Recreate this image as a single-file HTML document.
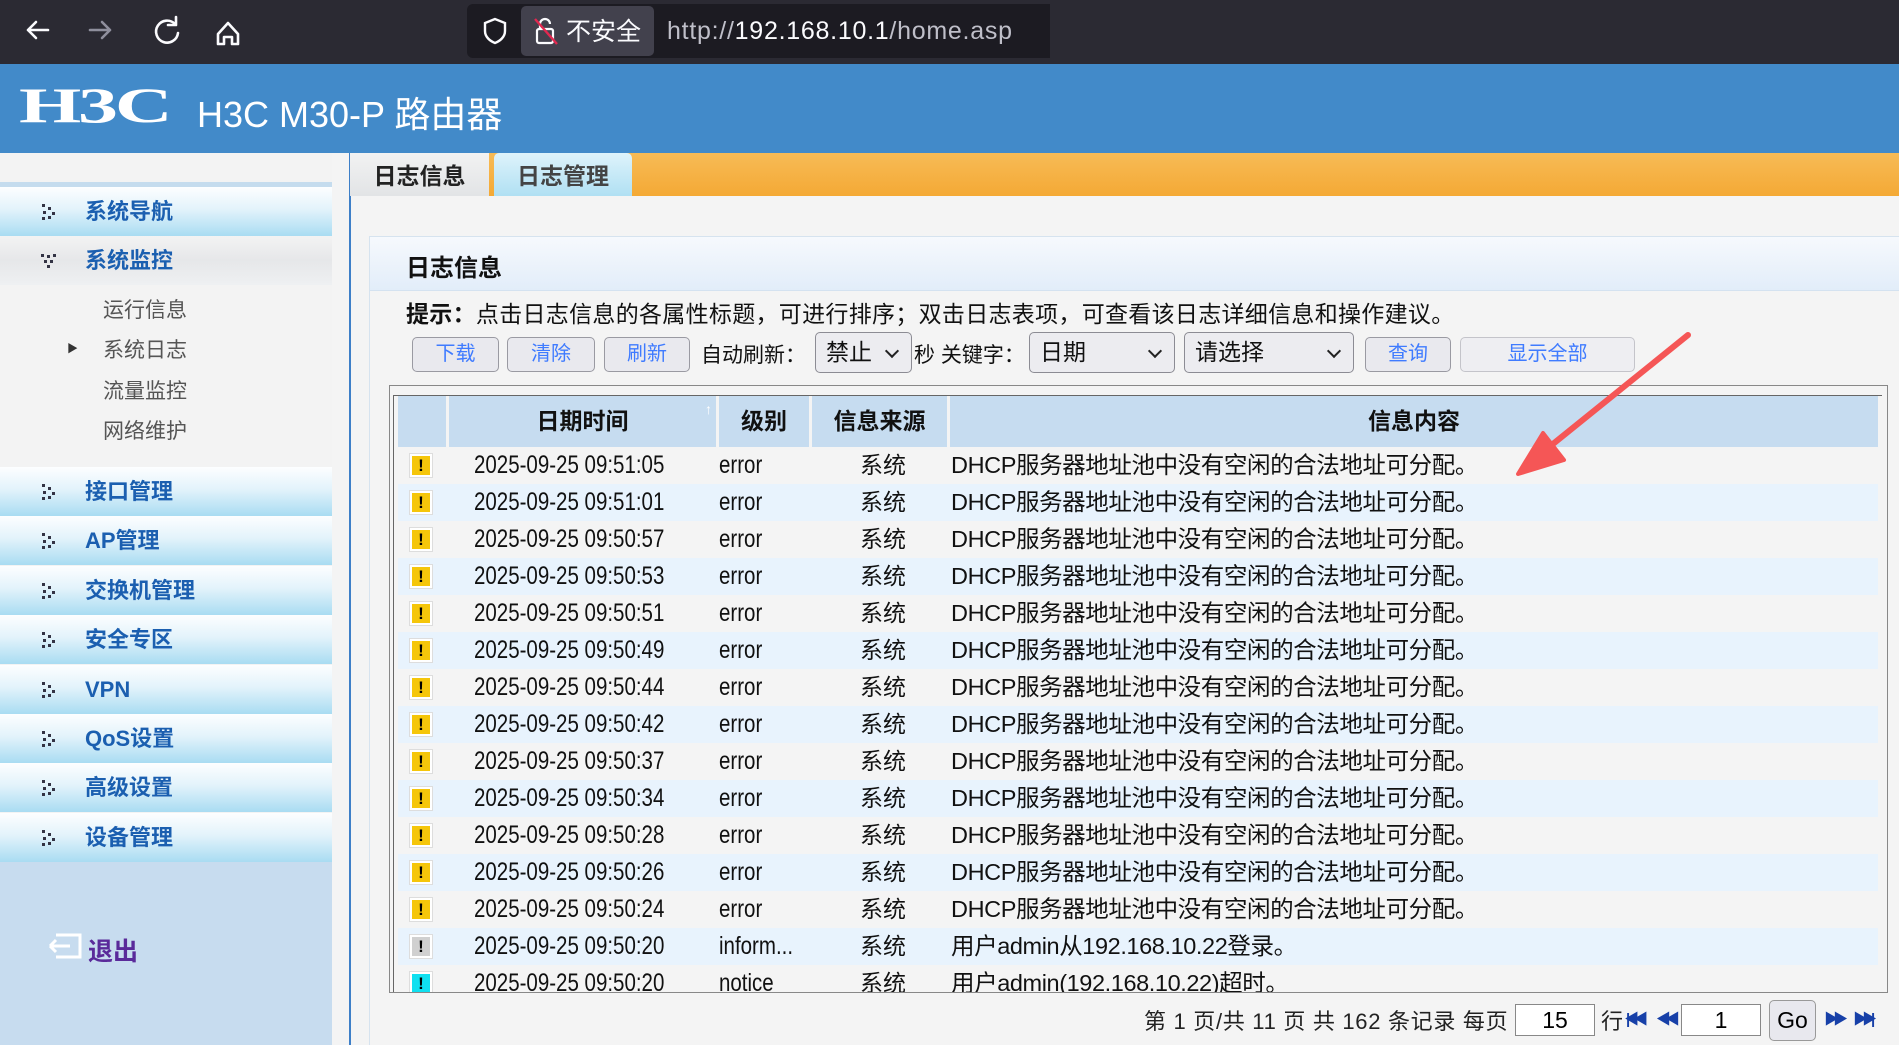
<!DOCTYPE html>
<html><head><meta charset="utf-8"><style>
*{margin:0;padding:0;box-sizing:border-box}
body{width:1899px;height:1045px;overflow:hidden;background:#f4f4f4;font-family:"Liberation Sans","Noto Sans CJK SC",sans-serif;position:relative}
.abs{position:absolute}
.bar{left:0;top:0;width:1899px;height:64px;background:#2b2a33}
.hdr{left:0;top:64px;width:1899px;height:89px;background:#428ac9}
.side{left:0;top:153px;width:332px;height:892px;background:#f3f3f3}
.sidebot{left:0;top:862px;width:332px;height:183px;background:#c7dcef}
.vline{left:349px;top:153px;width:2px;height:892px;background:#3d7fc8}
.mi{position:absolute;left:0;width:332px;height:49px;background:linear-gradient(#fdfeff,#e3f3fb 45%,#a9dcf2);color:#1b5fb0;font-weight:bold;font-size:22px;line-height:49px;padding-left:85px}
.mi svg{position:absolute;left:40px;top:15px}
.sub{position:absolute;left:103px;font-size:21px;color:#555}
.tabbar{left:350px;top:153px;width:1549px;height:43px;background:linear-gradient(#f7bb56,#f4a935)}
.tab{position:absolute;top:153px;height:43px;font-size:23px;font-weight:bold;line-height:46px;text-align:center}
.panel{left:369px;top:236px;width:1530px;height:809px;border-left:1px solid #d6e3ef;border-top:1px solid #d6e3ef}
.ph{left:370px;top:237px;width:1529px;height:54px;background:linear-gradient(#f6f9fd,#e2edf9);border-bottom:1px solid #d4e2f0}
.btn{position:absolute;top:337px;height:35px;border:1px solid #9a9aa2;border-radius:5px;background:#e9e9ee;color:#3f7bff;font-size:20px;text-align:center;line-height:33px}
.sel{position:absolute;top:332px;height:41px;border:1px solid #8c8c94;border-radius:5px;background:#ececf0;font-size:23px;line-height:39px;padding-left:10px;color:#111}
.sel:after{content:"";position:absolute;right:14px;top:13px;width:8px;height:8px;border-right:2.5px solid #222;border-bottom:2.5px solid #222;transform:rotate(45deg)}
.lbl{position:absolute;top:339px;font-size:21px;color:#111}
.tbl{left:389px;top:385px;width:1499px;height:608px;border:1px solid #888;overflow:hidden}
.tin{position:absolute;left:3px;top:9px;width:1489px;height:600px;border-left:1px solid #666;border-top:1px solid #666;overflow:hidden}
.th{position:absolute;top:0;height:51px;background:#c6dcf0;font-weight:bold;font-size:23px;line-height:51px;text-align:center;color:#111}
.row{position:absolute;left:4px;width:1480px;height:37px;font-size:23px;line-height:37px;color:#111}
.row.alt{background:#e8f3fd}
.row span{position:absolute;top:0;white-space:nowrap}
.row .d{font-size:25px;transform:scaleX(0.82);transform-origin:left}
.wi{position:absolute;left:12px;top:7px;width:22px;height:23px;background:#f5c60a;border:2px solid #fff;outline:1px solid #ddd;color:#000;font-weight:bold;font-size:17px;line-height:19px;text-align:center}
.pg{position:absolute;top:1004px;font-size:22px;color:#222;letter-spacing:0.7px}
.inp{position:absolute;top:1004px;height:32px;border:1px solid #888;background:#fff;font-size:23px;text-align:center;line-height:30px}
.nav{position:absolute;top:1008px;color:#1740a8;font-size:15px;font-weight:bold;letter-spacing:-6px}
</style></head><body>
<div class="abs bar"></div>
<svg class="abs" style="left:0;top:0" width="1050" height="64">
<g stroke="#fbfbfe" stroke-width="2.6" fill="none" stroke-linecap="round" stroke-linejoin="round">
<path d="M28 30h20M28 30l8-8M28 30l8 8"/>
<path d="M90 30h20M110 30l-8-8M110 30l-8 8" stroke="#8f8f9d"/>
<path d="M175 24a11 11 0 1 0 3 9M176 17v8h-8"/>
<path d="M218 34l10-11 10 11v10h-6v-7h-8v7h-6z"/>
</g>
<rect x="467" y="4" width="590" height="54" rx="6" fill="#1c1b22"/>
<rect x="521" y="6" width="133" height="50" rx="5" fill="#42414d"/>
<path d="M495 19l-10 4v8c0 6 5 10 10 12 5-2 10-6 10-12v-8z" stroke="#fbfbfe" stroke-width="2.4" fill="none"/>
<rect x="537" y="29" width="16" height="14" rx="2" stroke="#fbfbfe" stroke-width="2.2" fill="none"/>
<path d="M540 29v-5a5 5 0 0 1 10 0" stroke="#fbfbfe" stroke-width="2.2" fill="none"/>
<path d="M535 19l22 25" stroke="#e22850" stroke-width="2.4"/>
<text x="566" y="40" fill="#fbfbfe" font-size="25" font-family="Liberation Sans,Noto Sans CJK SC,sans-serif">不安全</text>
<text x="667" y="39" fill="#bfbfc9" font-size="25" font-family="Liberation Sans,sans-serif" textLength="345">http://<tspan fill="#fbfbfe">192.168.10.1</tspan>/home.asp</text>
</svg>
<div class="abs hdr"></div>
<div class="abs" style="left:19px;top:76px;color:#fff;font-size:50px;font-weight:bold;font-family:'Liberation Serif',serif;letter-spacing:-2px;transform:scaleX(1.6);transform-origin:left">H3C</div>
<div class="abs" style="left:197px;top:86px;color:#fff;font-size:36px">H3C M30-P 路由器</div>
<div class="abs side"></div>
<div class="abs" style="left:0;top:182px;width:332px;height:5px;background:#c5dcee"></div>
<div class="mi" style="top:187px"><svg width="20" height="20"><g fill="#334"><rect x="2" y="2" width="3" height="3"/><rect x="8" y="5" width="3" height="3"/><rect x="3" y="9" width="3" height="3"/><rect x="12" y="10" width="3" height="3"/><rect x="2" y="15" width="3" height="3"/><rect x="8" y="14" width="3" height="3"/></g></svg>系统导航</div>
<div class="mi" style="top:236px;background:linear-gradient(#f3f3f3,#e6e7e9 50%,#eef0f2)"><svg width="20" height="20"><g fill="#334"><rect x="1" y="3" width="3" height="3"/><rect x="7" y="4" width="3" height="3"/><rect x="13" y="3" width="3" height="3"/><rect x="4" y="9" width="3" height="3"/><rect x="10" y="9" width="3" height="3"/><rect x="7" y="14" width="3" height="3"/></g></svg>系统监控</div>
<div class="sub" style="top:294px">运行信息</div>
<div class="sub" style="top:334px">系统日志</div><div class="abs" style="left:67px;top:340px;font-size:11px;color:#333">▶</div>
<div class="sub" style="top:375px">流量监控</div>
<div class="sub" style="top:415px">网络维护</div>
<div id="menus"></div>
<div class="abs sidebot"></div>
<svg class="abs" style="left:46px;top:931px" width="38" height="30"><path d="M10 4h24v22H10M4 15h20M4 15l6-6M4 15l6 6" stroke="#fff" stroke-width="3" fill="none"/></svg>
<div class="abs" style="left:88px;top:932px;font-size:25px;font-weight:bold;color:#5a2a9a">退出</div>
<div class="abs vline"></div>
<div class="abs tabbar"></div>
<div class="tab" style="left:350px;width:139px;background:linear-gradient(#f2f2f2,#e2e4e6);color:#222">日志信息</div>
<div class="tab" style="left:494px;width:138px;background:linear-gradient(#def3fb,#b0e0f3);color:#444;border-radius:5px 5px 0 0">日志管理</div>
<div class="abs panel"></div>
<div class="abs ph"></div>
<div class="abs" style="left:406px;top:248px;font-size:24px;font-weight:bold;color:#111">日志信息</div>
<div class="abs" style="left:406px;top:295px;font-size:23px;color:#111;letter-spacing:0.3px"><b>提示：</b>点击日志信息的各属性标题，可进行排序；双击日志表项，可查看该日志详细信息和操作建议。</div>
<div class="btn" style="left:412px;width:87px">下载</div>
<div class="btn" style="left:507px;width:88px">清除</div>
<div class="btn" style="left:604px;width:86px">刷新</div>
<div class="lbl" style="left:701px">自动刷新：</div>
<div class="sel" style="left:815px;width:97px">禁止</div>
<div class="lbl" style="left:914px">秒 关键字：</div>
<div class="sel" style="left:1029px;width:146px">日期</div>
<div class="sel" style="left:1184px;width:170px">请选择</div>
<div class="btn" style="left:1365px;width:86px">查询</div>
<div class="btn" style="left:1460px;width:175px;border-color:#c4c4ca;background:#eeeef2">显示全部</div>
<div class="abs tbl"><div class="tin">
<div class="th" style="left:4px;width:48px"></div>
<div class="th" style="left:55px;width:267px">日期时间<span style="position:absolute;right:4px;top:-12px;color:#fff;font-size:14px">↑</span></div>
<div class="th" style="left:325px;width:90px">级别</div>
<div class="th" style="left:418px;width:135px">信息来源</div>
<div class="th" style="left:556px;width:928px">信息内容</div>
<div id="rows"></div>
</div></div>
<div class="pg" style="left:1144px">第 1 页/共 11 页 共 162 条记录 每页</div>
<div class="inp" style="left:1515px;width:80px">15</div>
<div class="pg" style="left:1601px">行</div>
<div class="nav" style="left:1626px">|◀◀</div>
<div class="nav" style="left:1656px">◀◀</div>
<div class="inp" style="left:1681px;width:80px">1</div>
<div class="abs" style="left:1769px;top:1000px;width:47px;height:41px;border:1px solid #999;border-radius:5px;background:#e8e8ee;font-size:23px;text-align:center;line-height:39px">Go</div>
<div class="nav" style="left:1824px">▶▶</div>
<div class="nav" style="left:1853px">▶▶|</div>
<svg class="abs" style="left:1500px;top:320px" width="210" height="170"><path d="M188 15L43 132" stroke="#f55656" stroke-width="6" stroke-linecap="round"/><path d="M18 154L43 113L64 140z" fill="#f55656" stroke="#f55656" stroke-width="4" stroke-linejoin="round"/></svg>
<script>
var m=["接口管理","AP管理","交换机管理","安全专区","VPN","QoS设置","高级设置","设备管理"],mh="";
var ic='<svg width="20" height="20"><g fill="#334"><rect x="2" y="2" width="3" height="3"/><rect x="8" y="5" width="3" height="3"/><rect x="3" y="9" width="3" height="3"/><rect x="12" y="10" width="3" height="3"/><rect x="2" y="15" width="3" height="3"/><rect x="8" y="14" width="3" height="3"/></g></svg>';
for(var j=0;j<8;j++)mh+='<div class="mi" style="top:'+(467+49.4*j)+'px">'+ic+m[j]+'</div>';
document.getElementById("menus").innerHTML=mh;
var t=["09:51:05","09:51:01","09:50:57","09:50:53","09:50:51","09:50:49","09:50:44","09:50:42","09:50:37","09:50:34","09:50:28","09:50:26","09:50:24","09:50:20","09:50:20"];
var h="";
for(var i=0;i<15;i++){
var lv="error",msg="DHCP服务器地址池中没有空闲的合法地址可分配。",bg="#f5c60a";
if(i==13){lv="inform...";msg="用户admin从192.168.10.22登录。";bg="#d0d0d0";}
if(i==14){lv="notice";msg="用户admin(192.168.10.22)超时。";bg="#10e0f0";}
h+='<div class="row'+(i%2?' alt':'')+'" style="top:'+(51+37*i)+'px"><div class="wi" style="background:'+bg+'">!</div><span class="d" style="left:76px">2025-09-25 '+t[i]+'</span><span class="d" style="left:321px">'+lv+'</span><span style="left:421px;width:128px;text-align:center">系统</span><span style="left:553px;font-size:23.5px;letter-spacing:-0.4px">'+msg+'</span></div>';
}
document.getElementById("rows").innerHTML=h;
</script>
</body></html>
